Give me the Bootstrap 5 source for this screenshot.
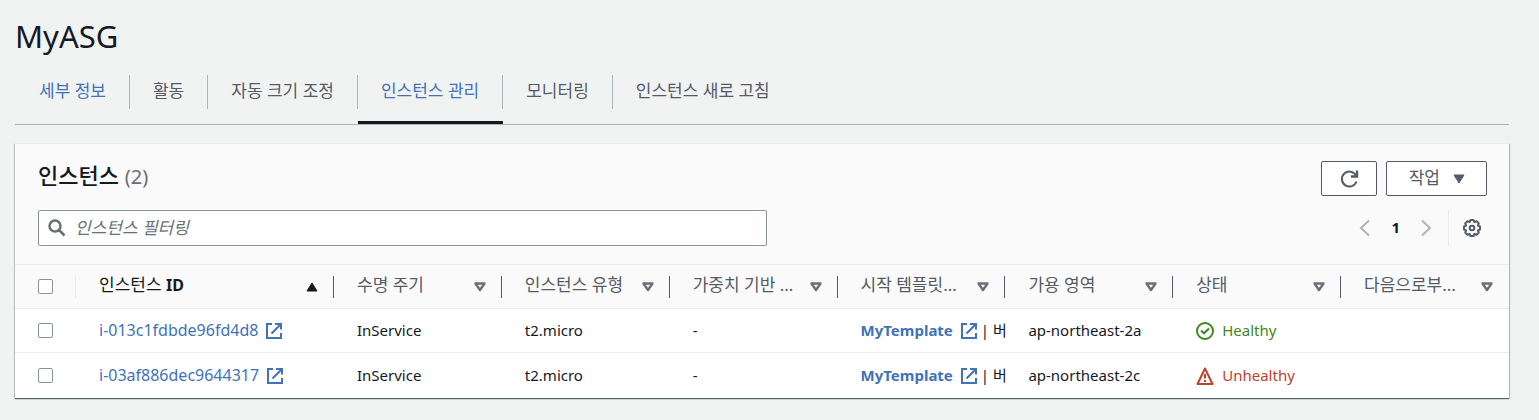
<!DOCTYPE html>
<html lang="ko">
<head>
<meta charset="utf-8">
<meta name="viewport" content="width=device-width, initial-scale=1">
<title>MyASG</title>
<link href="https://cdn.jsdelivr.net/npm/bootstrap@5.3.0/dist/css/bootstrap.min.css" rel="stylesheet">
<style>
  :root { --ink:#16191f; --gray:#545b64; --blue:#4272b8; --line:#eaeded; --edge:#879596; }
  body { background:#f1f3f3; color:var(--ink); font-family:"Noto Sans","Noto Sans CJK KR",sans-serif; font-size:15px; line-height:22px; }
  a { color:var(--blue); text-decoration:none; }
  main { padding:16px 30px 21px 15px; }
  h1 { font-size:31px; line-height:40px; font-weight:400; margin:0 0 19px; }
  .asg-tabs { border-bottom:1px solid #aab7b8; font-size:17px; }
  .asg-tabs li { padding-bottom:12px; border-bottom:3px solid transparent; }
  .asg-tabs li:has(.active) { border-image:linear-gradient(to right,transparent 1px,var(--ink) 1px) 3; border-bottom-color:var(--ink); }
  .asg-tabs .nav-link { color:var(--gray); font-weight:400; padding:0 23px; line-height:32px; height:34px; border-right:1px solid #aab7b8; }
  .asg-tabs li:first-child .nav-link, .asg-tabs .nav-link.active { color:var(--blue); }
  .asg-tabs li:first-child .nav-link { padding-left:24px; }
  .asg-tabs li:last-child .nav-link { border-right:0; }
  .asg-panel { margin-top:18px; background:#fff; box-shadow:0 1px 1px 0 rgba(0,28,36,.5),1px 1px 1px 0 rgba(0,28,36,.2),-1px 1px 1px 0 rgba(0,28,36,.15); }
  .panel-top { background:#fafafa; padding:17px 22px 18px 23px; border-top:1px solid var(--line); }
  h2 { font-size:22px; line-height:28px; font-weight:500; margin:0; }
  h2 span { font-size:20px; font-weight:400; color:#687078; }
  .btn-asg { background:#fff; border:1px solid var(--gray); border-radius:2px; height:35px; padding:0 21px 0 22px; color:var(--gray); font-size:17px; line-height:29px; gap:13px; }
  .btn-asg span { padding-bottom:2px; }
  .btn-asg.icon-only { padding:0 19px; }
  .btn-plain { border:0; background:none; padding:0; line-height:0; }
  .search-wrap { max-width:729px; height:36px; border:1px solid var(--edge); border-radius:2px; background:#fff; padding-left:9px; }
  .search-wrap input { border:0; outline:0; background:none; font-size:17px; height:34px; padding:0 0 2px 9px; }
  .search-wrap input::placeholder { color:#687078; font-style:italic; opacity:1; }
  .pager { height:36px; }
  .pager .rule { border-left:1px solid var(--line); height:36px; }
  .pager b { padding-bottom:2px; }
  .asg-table { table-layout:fixed; width:100%; border-collapse:separate; border-spacing:0; }
  .asg-table th, .asg-table td { height:44px; padding:0 0 0 23px; border-top:1px solid var(--line); white-space:nowrap; }
  .asg-table td { padding-bottom:2px; }
  .asg-table td:first-child { padding-bottom:0; }
  .asg-table td svg { margin-top:2px; }
  .asg-table tr:last-child td { height:46px; }
  .asg-table th { background:#fafafa; color:var(--gray); font-weight:400; font-size:17px; }
  .asg-table th span { padding-bottom:3px; }
  .asg-table th.sorted { color:var(--ink); }
  .asg-table th.sorted b { font-size:16px; font-weight:700; }
  .instance-id { font-size:16px; }
  .head-cell { height:22px; padding-right:15px; border-right:1px solid var(--gray); }
  .head-cell.quiet { border-color:var(--line); }
  th:last-child .head-cell { border-right:0; padding-right:16px; }
  .asg-table input { appearance:none; width:15px; height:15px; border:1px solid var(--edge); border-radius:2px; background:#fff; display:block; margin:0; }
  .asg-table input:checked { background:var(--blue); }
  .ok { color:#3f8624; } .bad { color:#c0412a; }
  svg { flex:none; display:block; }
</style>
</head>
<body>
<svg width="0" height="0" class="position-absolute" aria-hidden="true">
  <symbol id="ext" viewBox="0 0 16 16"><path d="M6 1H1v14h14v-5M9 1h6v5.500M14.500 1.500L5.500 10.500" fill="none" stroke="currentColor" stroke-width="2"/></symbol>
  <symbol id="down" viewBox="0 0 12 10"><path d="M1.500 1.500h9L6 8z" fill="none" stroke="#687078" stroke-width="2.400" stroke-linejoin="round"/></symbol>
</svg>
<main>
  <h1>MyASG</h1>
  <ul class="nav asg-tabs">
    <li><a class="nav-link" href="#">세부 정보</a></li>
    <li><a class="nav-link" href="#">활동</a></li>
    <li><a class="nav-link" href="#">자동 크기 조정</a></li>
    <li><a class="nav-link active" href="#">인스턴스 관리</a></li>
    <li><a class="nav-link" href="#">모니터링</a></li>
    <li><a class="nav-link" href="#">인스턴스 새로 고침</a></li>
  </ul>
  <section class="asg-panel">
    <div class="panel-top">
      <div class="d-flex justify-content-between align-items-start">
        <h2>인스턴스 <span>(2)</span></h2>
        <div class="d-flex" style="gap:9px">
          <button class="btn-asg icon-only" type="button" aria-label="새로 고침"><svg width="16" height="18" viewBox="0 0 16 18" overflow="visible"><path d="M15.500 11.500A7.500 7.500 0 1 1 15 5.500" fill="none" stroke="currentColor" stroke-width="2"/><path d="M16 .5v6h-6" fill="none" stroke="currentColor" stroke-width="2.400"/></svg></button>
          <button class="btn-asg d-flex align-items-center" type="button"><span>작업</span><svg width="12" height="10" viewBox="0 0 12 10"><path d="M1 1h10L6 9z" fill="currentColor" stroke="currentColor" stroke-linejoin="round"/></svg></button>
        </div>
      </div>
      <div class="d-flex justify-content-between" style="margin-top:14px">
        <div class="search-wrap d-flex align-items-center flex-grow-1">
          <svg width="18" height="18" viewBox="0 0 18 18"><path d="M7 1.500a5.500 5.500 0 1 1 0 11a5.500 5.500 0 0 1 0-11M11 11l5.500 5.500" fill="none" stroke="#687078" stroke-width="2.500"/></svg>
          <input class="flex-grow-1" type="text" placeholder="인스턴스 필터링" aria-label="인스턴스 필터링">
        </div>
        <div class="pager d-flex align-items-center">
          <button class="btn-plain" type="button" aria-label="이전"><svg width="12" height="18" viewBox="0 0 12 18"><path d="M10 1.500L2 9l8 7.500" fill="none" stroke="#aab7b8" stroke-width="2"/></svg></button>
          <b class="px-1 mx-3">1</b>
          <button class="btn-plain" type="button" aria-label="다음"><svg width="12" height="18" viewBox="0 0 12 18"><path d="M2 1.500L10 9l-8 7.500" fill="none" stroke="#aab7b8" stroke-width="2"/></svg></button>
          <span class="rule ms-3"></span>
          <button class="btn-plain" type="button" aria-label="설정" style="padding:0 6px 0 14px"><svg width="18" height="18" viewBox="0 0 18 18" fill="none" stroke="#545b64"><path d="M7.500 1h3l.9 2.100 2.200-.9 2.200 2.200-.9 2.200 2.100.9v3l-2.100.9.9 2.200-2.200 2.200-2.200-.9-.9 2.100h-3l-.9-2.100-2.200.9-2.200-2.200.9-2.200L1 10.500v-3l2.100-.9-.9-2.200 2.200-2.200 2.200.9z" stroke-width="2" stroke-linejoin="round"/><circle cx="9" cy="9" r="2.300" stroke-width="2"/></svg></button>
        </div>
      </div>
    </div>
    <table class="asg-table">
      <colgroup><col style="width:61px"><col style="width:258px"><col><col><col><col><col><col><col></colgroup>
      <thead><tr>
        <th><div class="head-cell quiet d-flex align-items-center"><input type="checkbox" aria-label="모두 선택"></div></th>
        <th class="sorted"><div class="head-cell d-flex align-items-center justify-content-between"><span>인스턴스 <b>ID</b></span><svg width="12" height="10" viewBox="0 0 12 10"><path d="M1 9h10L6 1z" fill="currentColor" stroke="currentColor" stroke-linejoin="round"/></svg></div></th>
        <th><div class="head-cell d-flex align-items-center justify-content-between"><span>수명 주기</span><svg width="12" height="10"><use href="#down"/></svg></div></th>
        <th><div class="head-cell d-flex align-items-center justify-content-between"><span>인스턴스 유형</span><svg width="12" height="10"><use href="#down"/></svg></div></th>
        <th><div class="head-cell d-flex align-items-center justify-content-between"><span>가중치 기반 ...</span><svg width="12" height="10"><use href="#down"/></svg></div></th>
        <th><div class="head-cell d-flex align-items-center justify-content-between"><span>시작 템플릿...</span><svg width="12" height="10"><use href="#down"/></svg></div></th>
        <th><div class="head-cell d-flex align-items-center justify-content-between"><span>가용 영역</span><svg width="12" height="10"><use href="#down"/></svg></div></th>
        <th><div class="head-cell d-flex align-items-center justify-content-between"><span>상태</span><svg width="12" height="10"><use href="#down"/></svg></div></th>
        <th><div class="head-cell d-flex align-items-center justify-content-between"><span>다음으로부...</span><svg width="12" height="10"><use href="#down"/></svg></div></th>
      </tr></thead>
      <tbody>
        <tr>
          <td><input type="checkbox" aria-label="i-013c1fdbde96fd4d8 선택"></td>
          <td><a href="#" class="instance-id d-flex align-items-center gap-2">i-013c1fdbde96fd4d8 <svg width="16" height="16"><use href="#ext"/></svg></a></td>
          <td>InService</td><td>t2.micro</td><td>-</td>
          <td><div class="d-flex align-items-center"><a href="#" class="d-flex align-items-center gap-2 fw-bold">MyTemplate <svg width="16" height="16"><use href="#ext"/></svg></a><span class="ms-1">| 버</span></div></td>
          <td>ap-northeast-2a</td>
          <td><div class="ok d-flex align-items-center gap-2"><svg width="18" height="18" viewBox="0 0 18 18" fill="none" stroke="currentColor" stroke-width="2"><circle cx="9" cy="9" r="8"/><path d="M5 8.500l3 2.800L13 6.500"/></svg>Healthy</div></td>
          <td></td>
        </tr>
        <tr>
          <td><input type="checkbox" aria-label="i-03af886dec9644317 선택"></td>
          <td><a href="#" class="instance-id d-flex align-items-center gap-2">i-03af886dec9644317 <svg width="16" height="16"><use href="#ext"/></svg></a></td>
          <td>InService</td><td>t2.micro</td><td>-</td>
          <td><div class="d-flex align-items-center"><a href="#" class="d-flex align-items-center gap-2 fw-bold">MyTemplate <svg width="16" height="16"><use href="#ext"/></svg></a><span class="ms-1">| 버</span></div></td>
          <td>ap-northeast-2c</td>
          <td><div class="bad d-flex align-items-center gap-2"><svg width="18" height="18" viewBox="0 0 18 18" fill="none" stroke="currentColor" stroke-width="2"><path d="M9 1.500L1.500 17h15z" stroke-linejoin="round"/><path d="M9 7v4.500M9 13v2"/></svg>Unhealthy</div></td>
          <td></td>
        </tr>
      </tbody>
    </table>
  </section>
</main>
<script src="https://cdn.jsdelivr.net/npm/bootstrap@5.3.0/dist/js/bootstrap.bundle.min.js"></script>
</body>
</html>
